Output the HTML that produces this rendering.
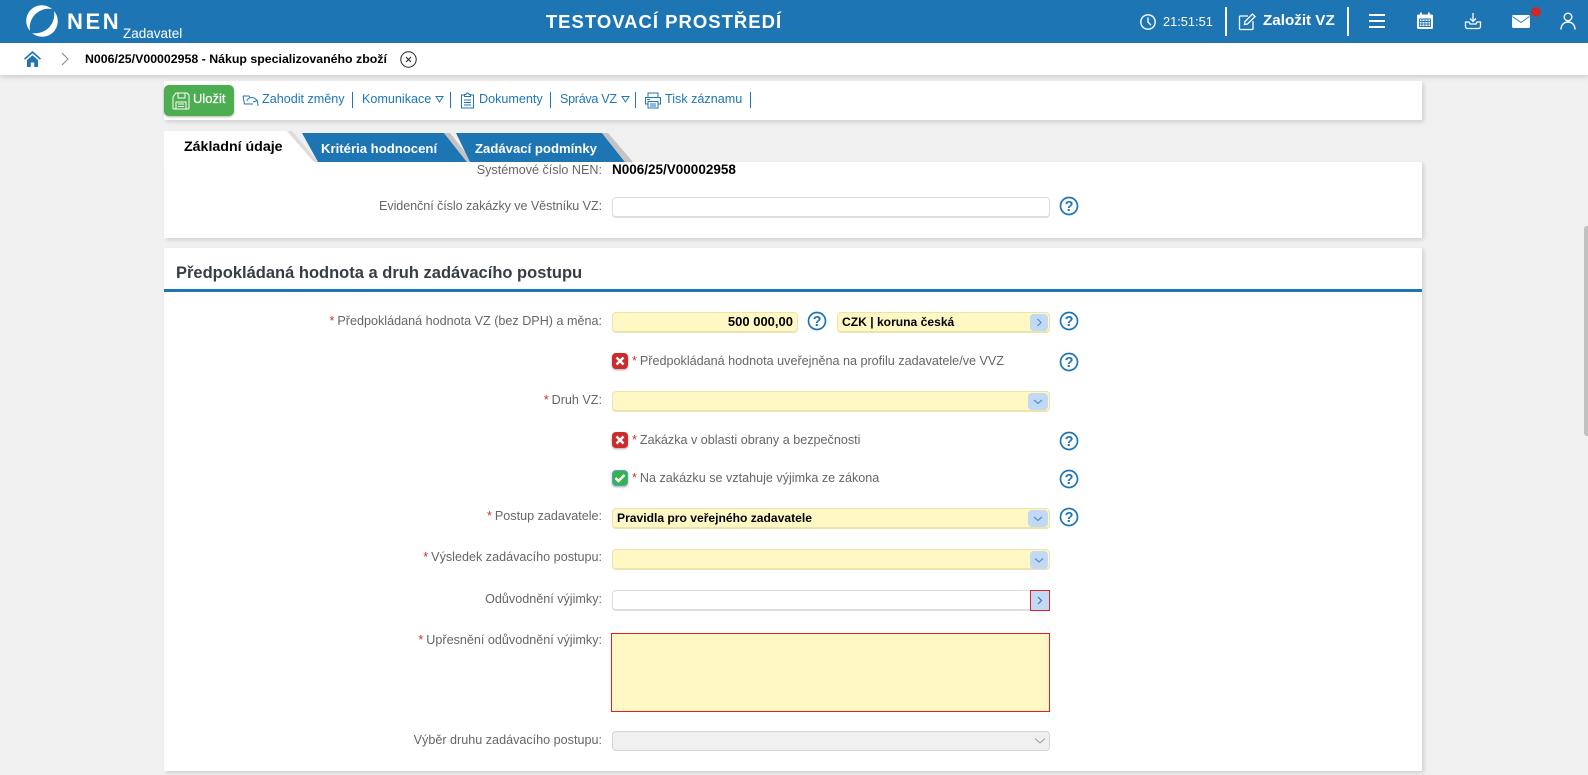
<!DOCTYPE html>
<html lang="cs"><head><meta charset="utf-8"><title>NEN</title>
<style>
html,body{margin:0;padding:0}
body{width:1588px;height:775px;overflow:hidden;background:#f0f0f0;position:relative;font-family:"Liberation Sans",sans-serif;font-size:13px;color:#666}
div,span,svg{position:absolute;box-sizing:border-box}
.t{white-space:nowrap;line-height:16px}
.hd{color:#fff}
.tb{color:#1f76b5;font-size:12.6px;top:91px}
.sep{width:1px;background:#1f76b5;top:92px;height:16px}
.p{background:#fff;box-shadow:2px 2px 4px rgba(0,0,0,.13)}
.l{right:986px;text-align:right;white-space:nowrap;line-height:16px;color:#666;font-size:12.6px}
.l b,.c b{font-weight:400;color:#c9302c;position:static;margin-right:3px}
.c{left:632px;white-space:nowrap;line-height:16px;color:#666;font-size:12.6px}
.i{border:1px solid #ddd;border-bottom:2px solid #ddd;border-radius:4px;background:#fff;left:612px;width:438px;height:21px}
.y{background:#fff8c4;border-color:#ebe4ae}
.v{color:#000;font-weight:700;font-size:12.1px;line-height:16px;white-space:nowrap}
.dd{width:20px;height:17px;background:#c1d9f4;border-radius:4px;left:1028px}
.dd svg,.ab svg{left:0;top:0}
.cb{left:612px;width:16px;height:16px;border-radius:4px;background:#cc2b2b;box-shadow:0 1px 2px rgba(0,0,0,.35)}
.q{width:20px;height:20px}
</style></head><body>

<div class="hd" style="left:0;top:0;width:1588px;height:43px;background:#1d75b4"></div>
<svg style="left:26px;top:5px" width="32" height="32" viewBox="0 0 32 32" fill="#fff"><path d="M4 26A15.600 15.600 0 0 1 26 4 19 19 0 0 0 4 26z"/><path d="M28 6A15.600 15.600 0 0 1 6 28 19 19 0 0 0 28 6z"/></svg>
<div class="t hd" style="left:67px;top:9px;font-size:22px;line-height:26px;font-weight:700;letter-spacing:2.6px">NEN</div>
<div class="t hd" style="left:123px;top:26px;font-size:13.5px">Zadavatel</div>
<div class="t hd" style="left:464px;width:400px;text-align:center;top:11px;font-size:18.5px;line-height:22px;font-weight:700;letter-spacing:1px">TESTOVACÍ PROSTŘEDÍ</div>
<svg style="left:1139px;top:13px" width="18" height="18" viewBox="0 0 18 18" fill="none" stroke="#fff" stroke-width="1.4"><circle cx="9" cy="9" r="7.2"/><path d="M9 4.500V9l3 3.200"/></svg>
<div class="t hd" style="left:1163px;top:14px;font-size:12.8px">21:51:51</div>
<div style="left:1225px;top:7px;width:2px;height:29px;background:#fff"></div>
<svg style="left:1238px;top:12px" width="19" height="19" viewBox="0 0 19 19" fill="none" stroke="#fff" stroke-width="1.3"><path d="M10 4H2.500A1 1 0 0 0 1.500 5v11.500a1 1 0 0 0 1 1H14a1 1 0 0 0 1-1V9"/><path d="M7 9.500 14.500 2l2.500 2.500L9.500 12l-3 .5z"/></svg>
<div class="t hd" style="left:1263px;top:13px;font-size:15.2px;font-weight:700">Založit VZ</div>
<div style="left:1347px;top:7px;width:2px;height:29px;background:#fff"></div>
<svg style="left:1368px;top:13px" width="18" height="16" fill="#fff"><rect x="1" y="1" width="16" height="2"/><rect x="1" y="7" width="16" height="2"/><rect x="1" y="13" width="16" height="2"/></svg>
<svg style="left:1416px;top:12px" width="18" height="18" viewBox="0 0 18 18"><rect x="1" y="2.500" width="16" height="14.500" rx="1.500" fill="#fff"/><rect x="4" y="0.500" width="1.800" height="4" fill="#fff"/><rect x="12" y="0.500" width="1.800" height="4" fill="#fff"/><path d="M3.500 7h11v7.500h-11zM6 7v7.500M9 7v7.500M12 7v7.500M3.500 9.500h11M3.500 12h11" fill="none" stroke="#1d75b4" stroke-width=".9"/></svg>
<svg style="left:1464px;top:12px" width="18" height="18" viewBox="0 0 18 18" fill="none" stroke="#fff" stroke-width="1.300"><path d="M9 1v8M6 6.500 9 9.500l3-3"/><path d="M5 10H1.500v4.500a2 2 0 0 0 2 2h11a2 2 0 0 0 2-2V10H13l-1 2H6z"/></svg>
<svg style="left:1512px;top:15px" width="18" height="13" viewBox="0 0 18 13"><rect width="18" height="13" rx="1.500" fill="#fff"/><path d="M.5 1.500 9 7.500l8.500-6" fill="none" stroke="#1d75b4" stroke-width=".9"/></svg>
<div style="left:1531px;top:7px;width:10px;height:10px;border-radius:50%;background:#cb2a2a"></div>
<svg style="left:1560px;top:12px" width="16" height="18" viewBox="0 0 16 18" fill="none" stroke="#fff" stroke-width="1.400"><circle cx="8" cy="5" r="3.800"/><path d="M1 17.500c0-4.500 3-7.500 7-7.500s7 3 7 7.500"/></svg>

<div style="left:0;top:43px;width:1588px;height:32px;background:#fff;box-shadow:0 2px 5px rgba(0,0,0,.15);z-index:3"></div>
<div style="z-index:4;left:0;top:0">
<svg style="left:24px;top:51px" width="17" height="16" viewBox="0 0 17 16" fill="#1d75b4"><path d="M8.500 0 0 7.500l1 1.200 7.500-6.400L16 8.700l1-1.200z"/><path d="M3 9 8.500 4.300 14 9v7h-3.800v-4.500H6.800V16H3z"/></svg>
<svg style="left:61px;top:52px" width="8" height="14" fill="none" stroke="#888" stroke-width="1"><path d="M1 1l6 6-6 6"/></svg>
<div class="t" style="left:85px;top:51px;color:#000;font-weight:700;font-size:12.35px">N006/25/V00002958 - Nákup specializovaného zboží</div>
<svg style="left:400px;top:51px" width="17" height="17" fill="none" stroke="#222" stroke-width="1"><circle cx="8.500" cy="8.500" r="7.700"/><path d="M6 6l5 5M11 6l-5 5"/></svg>
</div>

<div class="p" style="left:164px;top:81px;width:1258px;height:39px"></div>
<div style="left:164px;top:85px;width:70px;height:31px;border-radius:5px;background:#4cae50;box-shadow:0 1px 2px rgba(0,0,0,.3)"></div>
<svg style="left:172px;top:92px" width="18" height="18" viewBox="0 0 18 18" fill="none" stroke="#fff" stroke-width="1"><path d="M4 1h11l2 2v13a1 1 0 0 1-1 1H2a1 1 0 0 1-1-1V5z"/><path d="M6 1v5h7V1M4 17v-7h10v7M6 12h6M6 14.500h6"/></svg>
<div class="t" style="left:193px;top:91px;color:#fff;font-size:13px;-webkit-text-stroke:.25px #fff">Uložit</div>
<svg style="left:242px;top:93px" width="17" height="14" viewBox="0 0 17 14" fill="none" stroke="#1f76b5" stroke-width="1"><path d="M1 3h6l1 1.500M1 3l1.500 8H11"/><path d="M5 8c1-3.500 6-5.500 10-.5M15.500 7.500 16 13M15.500 7.500 11 9"/></svg>
<div class="t tb" style="left:262px">Zahodit změny</div><div class="sep" style="left:352px"></div>
<div class="t tb" style="left:362px">Komunikace</div>
<svg style="left:435px;top:95px" width="10" height="9" fill="none" stroke="#1f76b5"><path d="M1 1.500h7L4.500 7z"/></svg>
<div class="sep" style="left:450px"></div>
<svg style="left:460px;top:92px" width="15" height="17" viewBox="0 0 15 17" fill="none" stroke="#1f76b5" stroke-width="1"><path d="M4.500 3H1.500v13h12V3h-3"/><path d="M4.500 4.500v-2H6a1.500 1.500 0 0 1 3 0h1.500v2zM4 8h7M4 10.500h7M4 13h7"/></svg>
<div class="t tb" style="left:479px">Dokumenty</div><div class="sep" style="left:550px"></div>
<div class="t tb" style="left:560px;letter-spacing:-.3px">Správa VZ</div>
<svg style="left:621px;top:95px" width="10" height="9" fill="none" stroke="#1f76b5"><path d="M1 1.500h7L4.500 7z"/></svg>
<div class="sep" style="left:635px"></div>
<svg style="left:644px;top:92px" width="18" height="17" viewBox="0 0 18 17" fill="none" stroke="#1f76b5" stroke-width="1"><path d="M4 5V1h10v4M4 12H1.500V5.500h15V12H14"/><path d="M4 9.500h10V16H4zM6 12h6M6 14h6M3 7.500h3"/></svg>
<div class="t tb" style="left:665px">Tisk záznamu</div><div class="sep" style="left:750px"></div>

<div class="p" style="left:164px;top:162px;width:1258px;height:76px"></div>
<svg style="left:164px;top:129px" width="480" height="34" viewBox="0 0 480 34">
<polygon points="0,2 123,2 150,33 0,33" fill="#fff"/>
<polygon points="123,2 128,2 154,33 150,33" fill="#dcdcdc"/>
<polygon points="138,4 280,4 303,33 154,33" fill="#1d75b4"/>
<polygon points="280,4 286,4 309,33 303,33" fill="#c4c4c4"/>
<polygon points="292,4 438,4 461,33 306,33" fill="#1d75b4"/>
<polygon points="438,4 444,4 469,33 461,33" fill="#c4c4c4"/>
<text x="20" y="22" font-family="Liberation Sans" font-size="14.2" font-weight="700" fill="#000">Základní údaje</text>
<text x="157" y="24" font-family="Liberation Sans" font-size="13.150" font-weight="700" fill="#fff">Kritéria hodnocení</text>
<text x="311" y="24" font-family="Liberation Sans" font-size="13.150" font-weight="700" fill="#fff">Zadávací podmínky</text>
</svg>

<div class="l" style="top:162px">Systémové číslo NEN:</div>
<div class="v" style="left:612px;top:162px;font-size:13.500px">N006/25/V00002958</div>
<div class="l" style="top:198px;letter-spacing:-.08px">Evidenční číslo zakázky ve Věstníku VZ:</div>
<div class="i" style="top:197px"></div>
<svg class="q" style="left:1059px;top:196px" viewBox="0 0 20 20"><circle cx="10" cy="10" r="8.500" fill="#fff" stroke="#1d75b4" stroke-width="1.700"/><text x="10" y="15" text-anchor="middle" font-family="Liberation Sans" font-size="14.500" font-weight="700" fill="#1d75b4">?</text></svg>

<div class="p" style="left:164px;top:248px;width:1258px;height:523px"></div>
<div class="t" style="left:176px;top:263px;font-size:16.500px;line-height:20px;font-weight:700;color:#373d44">Předpokládaná hodnota a druh zadávacího postupu</div>
<div style="left:164px;top:289px;width:1258px;height:3px;background:#1d75b4"></div>

<div class="l" style="top:313px"><b>*</b>Předpokládaná hodnota VZ (bez DPH) a měna:</div>
<div class="i y" style="top:312px;width:186px"></div>
<div class="v" style="right:795px;top:314px;font-size:13px">500 000,00</div>
<svg class="q" style="left:807px;top:311px" viewBox="0 0 20 20"><circle cx="10" cy="10" r="8.500" fill="#fff" stroke="#1d75b4" stroke-width="1.700"/><text x="10" y="15" text-anchor="middle" font-family="Liberation Sans" font-size="14.500" font-weight="700" fill="#1d75b4">?</text></svg>
<div class="i y" style="left:837px;top:312px;width:213px"></div>
<div class="v" style="left:842px;top:314px">CZK | koruna česká</div>
<div class="dd" style="top:314px;left:1030px;width:18px"><svg width="18" height="17" fill="none" stroke="#5a8ac6" stroke-width="1.200"><path d="M7.500 5l3.500 3.500L7.500 12"/></svg></div>
<svg class="q" style="left:1059px;top:311px" viewBox="0 0 20 20"><circle cx="10" cy="10" r="8.500" fill="#fff" stroke="#1d75b4" stroke-width="1.700"/><text x="10" y="15" text-anchor="middle" font-family="Liberation Sans" font-size="14.500" font-weight="700" fill="#1d75b4">?</text></svg>

<div class="cb" style="top:353px"><svg width="16" height="16" fill="none" stroke="#fff" stroke-width="2.400"><path d="M4.500 4.500l7 7M11.500 4.500l-7 7"/></svg></div>
<div class="c" style="top:353px"><b>*</b>Předpokládaná hodnota uveřejněna na profilu zadavatele/ve VVZ</div>
<svg class="q" style="left:1059px;top:352px" viewBox="0 0 20 20"><circle cx="10" cy="10" r="8.500" fill="#fff" stroke="#1d75b4" stroke-width="1.700"/><text x="10" y="15" text-anchor="middle" font-family="Liberation Sans" font-size="14.500" font-weight="700" fill="#1d75b4">?</text></svg>

<div class="l" style="top:392px"><b>*</b>Druh VZ:</div>
<div class="i y" style="top:391px"></div>
<div class="dd" style="top:393px"><svg width="20" height="17" fill="none" stroke="#5a8ac6" stroke-width="1.200"><path d="M6 7l4 3.500 4-3.500"/></svg></div>

<div class="cb" style="top:432px"><svg width="16" height="16" fill="none" stroke="#fff" stroke-width="2.400"><path d="M4.500 4.500l7 7M11.500 4.500l-7 7"/></svg></div>
<div class="c" style="top:432px"><b>*</b>Zakázka v oblasti obrany a bezpečnosti</div>
<svg class="q" style="left:1059px;top:431px" viewBox="0 0 20 20"><circle cx="10" cy="10" r="8.500" fill="#fff" stroke="#1d75b4" stroke-width="1.700"/><text x="10" y="15" text-anchor="middle" font-family="Liberation Sans" font-size="14.500" font-weight="700" fill="#1d75b4">?</text></svg>

<div class="cb" style="top:470px;background:#36b44a;border:1px solid #5b9bd5"><svg style="left:-1px;top:-1px" width="16" height="16" fill="none" stroke="#fff" stroke-width="2.400"><path d="M3.500 8l3 3 6-6"/></svg></div>
<div class="c" style="top:470px"><b>*</b>Na zakázku se vztahuje výjimka ze zákona</div>
<svg class="q" style="left:1059px;top:469px" viewBox="0 0 20 20"><circle cx="10" cy="10" r="8.500" fill="#fff" stroke="#1d75b4" stroke-width="1.700"/><text x="10" y="15" text-anchor="middle" font-family="Liberation Sans" font-size="14.500" font-weight="700" fill="#1d75b4">?</text></svg>

<div class="l" style="top:508px"><b>*</b>Postup zadavatele:</div>
<div class="i y" style="top:508px"></div>
<div class="v" style="left:617px;top:510px">Pravidla pro veřejného zadavatele</div>
<div class="dd" style="top:510px"><svg width="20" height="17" fill="none" stroke="#5a8ac6" stroke-width="1.200"><path d="M6 7l4 3.500 4-3.500"/></svg></div>
<svg class="q" style="left:1059px;top:507px" viewBox="0 0 20 20"><circle cx="10" cy="10" r="8.500" fill="#fff" stroke="#1d75b4" stroke-width="1.700"/><text x="10" y="15" text-anchor="middle" font-family="Liberation Sans" font-size="14.500" font-weight="700" fill="#1d75b4">?</text></svg>

<div class="l" style="top:549px"><b>*</b>Výsledek zadávacího postupu:</div>
<div class="i y" style="top:549px"></div>
<div class="dd" style="top:551px;left:1030px;width:18px;height:18px"><svg width="18" height="18" fill="none" stroke="#5a8ac6" stroke-width="1.200"><path d="M5 7.500l4 3.500 4-3.500"/></svg></div>

<div class="l" style="top:591px">Odůvodnění výjimky:</div>
<div class="i" style="top:590px"></div>
<div style="left:1030px;top:590px;width:20px;height:21px;border:1px solid #e02020;background:#c1d9f4"><svg width="18" height="19" fill="none" stroke="#3d72b8" stroke-width="1.200" style="left:0;top:0"><path d="M7 6l3.500 3.500L7 13"/></svg></div>

<div class="l" style="top:632px"><b>*</b>Upřesnění odůvodnění výjimky:</div>
<div style="left:611px;top:633px;width:439px;height:79px;background:#fff8c4;border:1px solid #e02020"></div>

<div class="l" style="top:732px">Výběr druhu zadávacího postupu:</div>
<div class="i" style="top:731px;background:#f0f0f0;height:20px;border:1px solid #d4d4d4"></div>
<svg style="left:1033px;top:735px" width="14" height="12" fill="none" stroke="#999" stroke-width="1"><path d="M2 3.500l5 4.500 5-4.500"/></svg>

<div style="left:1584px;top:226px;width:4px;height:210px;background:#c1c1c1;border-radius:3px 0 0 3px"></div>
</body></html>
